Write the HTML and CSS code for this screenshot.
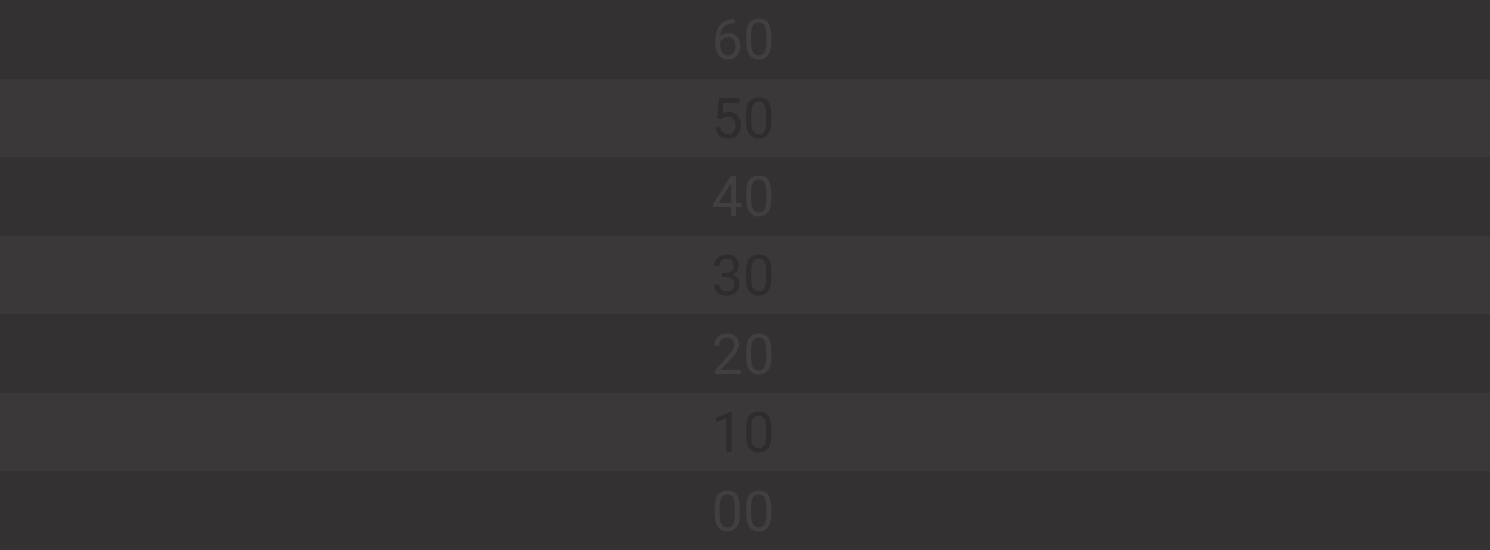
FILE: index.html
```html
<!DOCTYPE html>
<html>
<head>
<meta charset="utf-8">
<link rel="stylesheet" href="styles.css">
</head>
<body>
<div class="scale">
  <div class="row dark">60</div>
  <div class="row light">50</div>
  <div class="row dark">40</div>
  <div class="row light">30</div>
  <div class="row dark">20</div>
  <div class="row light">10</div>
  <div class="row dark">00</div>
</div>
</body>
</html>
```
FILE: styles.css
```css
html, body {
  margin: 0;
  padding: 0;
  height: 100%;
  background: #333132;
}
.scale {
  display: flex;
  flex-direction: column;
  height: 550px;
  font-family: Roboto, "Liberation Sans", sans-serif;
}
.row {
  flex: 1;
  display: flex;
  align-items: center;
  justify-content: center;
  font-size: 56px;
  line-height: 1;
  padding-top: 2px;
  padding-right: 4px;
}
.dark {
  background: #333132;
  color: #413f40;
}
.light {
  background: #3a3839;
  color: #2e2c2d;
}
```
